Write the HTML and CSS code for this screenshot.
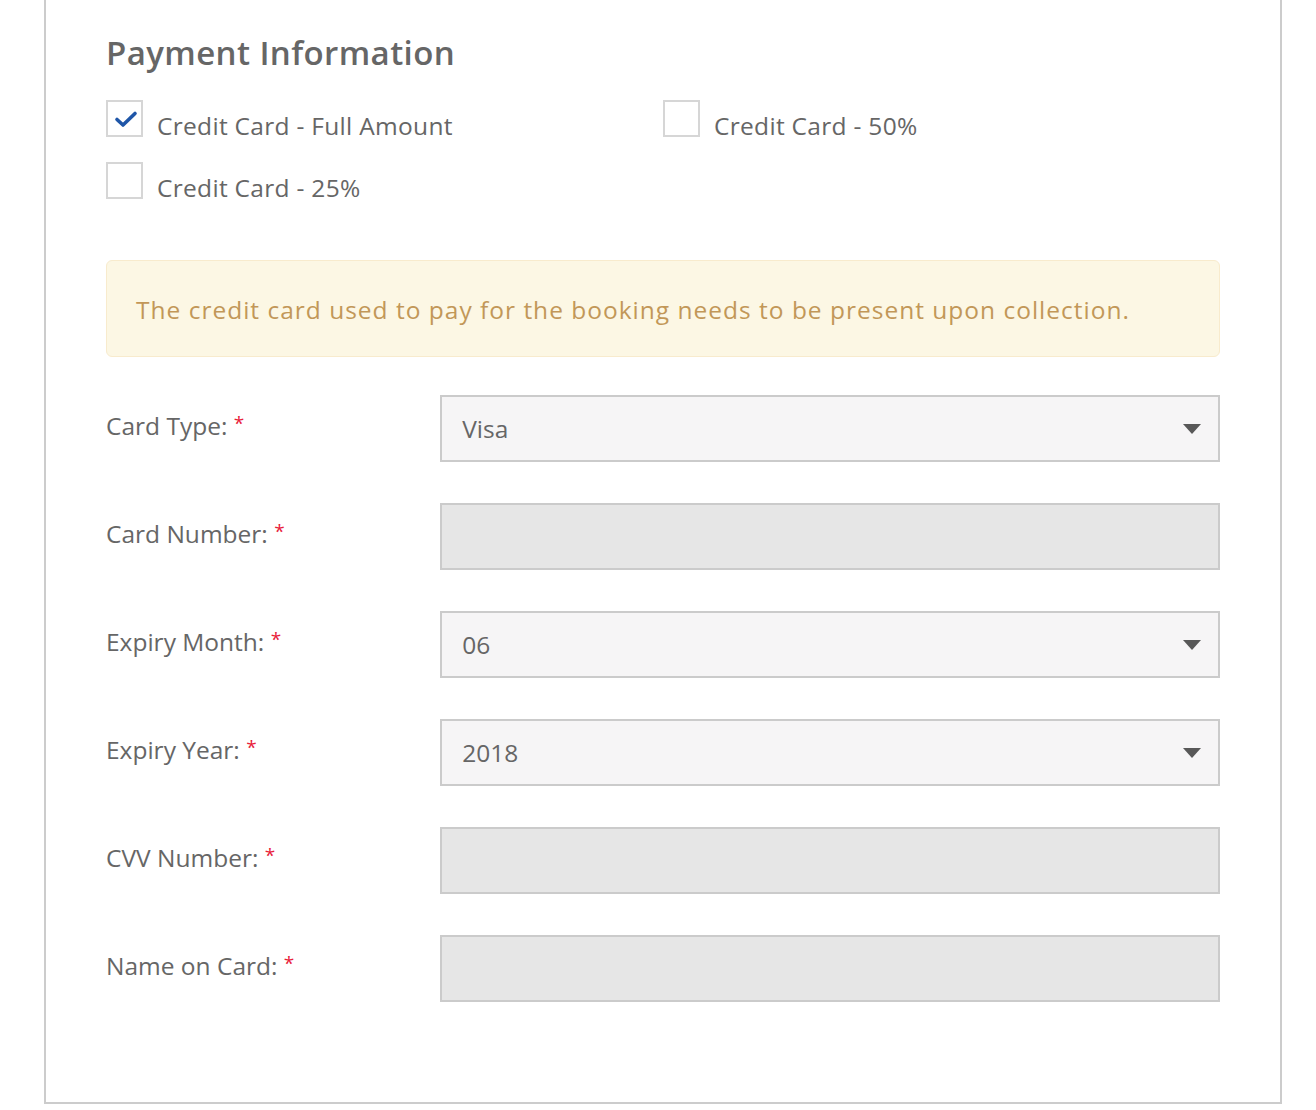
FILE: index.html
```html
<!DOCTYPE html>
<html lang="en">
<head>
<meta charset="utf-8">
<title>Payment Information</title>
<link rel="stylesheet" href="styles.css">
</head>
<body>
<div class="page">
  <section class="panel">
    <h2 class="title">Payment Information</h2>
    <div class="options">
      <label class="option">
        <span class="box">
          <svg class="check" width="33" height="33" viewBox="0 0 33 33"><path d="M9 17.5 L15 23 L27 11.5" fill="none" stroke="#1f56a8" stroke-width="3.6" stroke-linecap="round" stroke-linejoin="round"/></svg>
        </span>
        <span class="opt-text">Credit Card - Full Amount</span>
      </label>
      <label class="option">
        <span class="box"></span>
        <span class="opt-text">Credit Card - 50%</span>
      </label>
      <label class="option">
        <span class="box"></span>
        <span class="opt-text">Credit Card - 25%</span>
      </label>
    </div>
    <div class="alert">The credit card used to pay for the booking needs to be present upon collection.</div>
    <div class="form">
      <div class="row">
        <div class="label">Card Type: <span class="req">*</span></div>
        <div class="select"><span>Visa</span><svg class="arrow" width="18" height="10" viewBox="0 0 18 10"><path d="M0 0 H18 L9 10 Z" fill="#585858"/></svg></div>
      </div>
      <div class="row">
        <div class="label">Card Number: <span class="req">*</span></div>
        <input class="input" type="text">
      </div>
      <div class="row">
        <div class="label">Expiry Month: <span class="req">*</span></div>
        <div class="select"><span>06</span><svg class="arrow" width="18" height="10" viewBox="0 0 18 10"><path d="M0 0 H18 L9 10 Z" fill="#585858"/></svg></div>
      </div>
      <div class="row">
        <div class="label">Expiry Year: <span class="req">*</span></div>
        <div class="select"><span>2018</span><svg class="arrow" width="18" height="10" viewBox="0 0 18 10"><path d="M0 0 H18 L9 10 Z" fill="#585858"/></svg></div>
      </div>
      <div class="row">
        <div class="label">CVV Number: <span class="req">*</span></div>
        <input class="input" type="text">
      </div>
      <div class="row">
        <div class="label">Name on Card: <span class="req">*</span></div>
        <input class="input" type="text">
      </div>
    </div>
  </section>
</div>
</body>
</html>
```

FILE: styles.css
```css
html, body {
  margin: 0;
  padding: 0;
  background: #ffffff;
}
body {
  font-family: "Open Sans", "Noto Sans", sans-serif;
  color: #666666;
}
.page {
  padding: 0 34px 0 44px;
}
.panel {
  border: 2px solid #cccccc;
  border-top: 0;
  padding: 33px 60px 100px 60px;
  box-sizing: border-box;
}
.title {
  margin: 0;
  font-size: 33px;
  line-height: 40px;
  font-weight: 600;
  letter-spacing: 0.4px;
  color: #666666;
}
.options {
  margin-top: 27px;
  display: grid;
  grid-template-columns: 1fr 1fr;
  grid-auto-rows: 37px;
  row-gap: 25px;
}
.option {
  display: flex;
  align-items: flex-start;
  gap: 14px;
}
.box {
  width: 37px;
  height: 37px;
  box-sizing: border-box;
  border: 2px solid #d6d6d6;
  background: #fff;
  flex: none;
  display: flex;
}
.check {
  display: block;
}
.opt-text {
  margin-top: 8px;
  font-size: 24.5px;
  line-height: 36px;
  letter-spacing: 0.3px;
  white-space: nowrap;
}
.alert {
  margin-top: 61px;
  background: #fcf7e4;
  border: 1px solid #f8ebcd;
  border-radius: 6px;
  padding: 31px 29px 28px 29px;
  font-size: 24.5px;
  line-height: 36px;
  letter-spacing: 1px;
  color: #c29758;
}
.form {
  margin-top: 38px;
  display: flex;
  flex-direction: column;
  gap: 41px;
}
.row {
  display: grid;
  grid-template-columns: 30% 70%;
  height: 67px;
}
.label {
  padding-top: 13px;
  font-size: 24.5px;
  line-height: 36px;
  white-space: nowrap;
}
.req {
  color: #e8203a;
  font-size: 19px;
  vertical-align: top;
  line-height: 30px;
}
.select {
  box-sizing: border-box;
  height: 67px;
  border: 2px solid #cbcbcb;
  background: #f6f5f6;
  display: flex;
  align-items: center;
  justify-content: space-between;
  padding: 0 17px 0 20px;
  font-size: 24.5px;
  line-height: 36px;
  color: #666666;
}
.arrow {
  display: block;
}
.input {
  box-sizing: border-box;
  height: 67px;
  width: 100%;
  margin: 0;
  border: 2px solid #cbcbcb;
  background: #e6e6e6;
  border-radius: 0;
  outline: none;
  padding: 0 20px;
  font: inherit;
  font-size: 24.5px;
  -webkit-appearance: none;
  appearance: none;
}
```
